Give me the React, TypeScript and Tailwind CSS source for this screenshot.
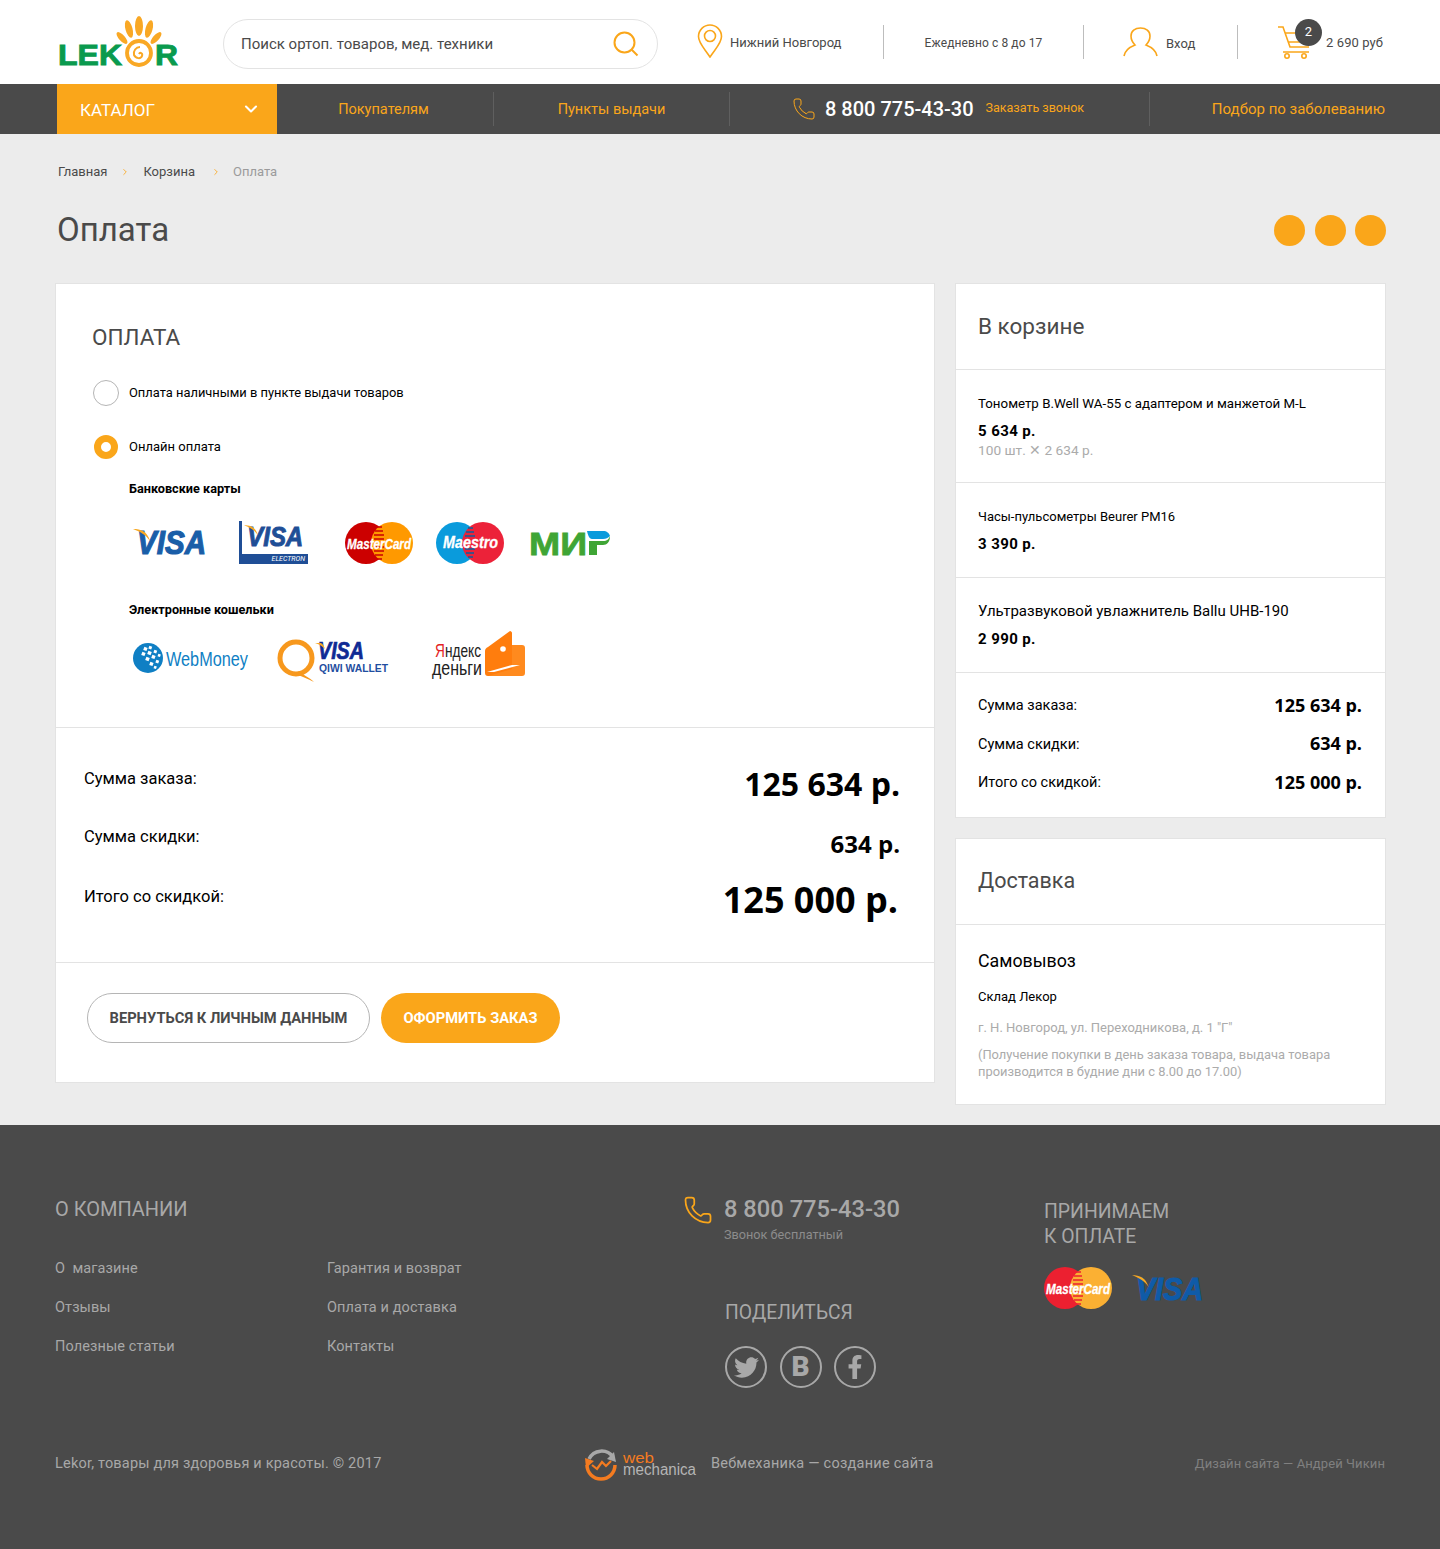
import React from 'react';
import { ChevronDown, ChevronRight, Phone } from 'lucide-react';
import { FaTwitter, FaFacebookF } from 'react-icons/fa';

const VisaLogo = ({ className = '', color = '#1a5ea8' }: { className?: string; color?: string }) => (
  <svg viewBox="0 0 74 30" className={`overflow-visible ${className}`}>
    <text x="4" y="28" fontFamily="Liberation Sans" fontWeight="700" fontStyle="italic" fontSize="33" fill={color} stroke={color} strokeWidth="1.2" textLength="69" lengthAdjust="spacingAndGlyphs">VISA</text>
    <path d="M0 3 C8 3 14 5 17 15 C13 9 8 6 0 3Z" fill="#f7a823" />
  </svg>
);

const MasterCardLogo = ({ className = '', left = '#cc0000', right = '#ff9900' }: { className?: string; left?: string; right?: string }) => (
  <svg viewBox="0 0 68 42" className={`overflow-visible ${className}`}>
    <circle cx="21" cy="21" r="21" fill={left} />
    <circle cx="47" cy="21" r="21" fill={right} />
    <path d="M32 5h5M30 9h8M29 13h10M29 17h10M29 25h10M29 29h10M30 33h8M32 37h5" stroke={left} strokeWidth="1.6" />
    <text x="2" y="26.500" fontFamily="Liberation Sans" fontWeight="700" fontStyle="italic" fontSize="15" fill="#fff" stroke="#fff" strokeWidth="0.3" textLength="64" lengthAdjust="spacingAndGlyphs">MasterCard</text>
  </svg>
);

const MaestroLogo = ({ className = '' }: { className?: string }) => (
  <svg viewBox="0 0 68 42" className={`overflow-visible ${className}`}>
    <circle cx="21" cy="21" r="21" fill="#0a9bdc" />
    <circle cx="47" cy="21" r="21" fill="#ec2239" />
    <path d="M32 6h5M30 10h8M29 14h10M29 27h10M30 31h8M32 35h5" stroke="#0a5f9e" strokeWidth="1.6" />
    <text x="7" y="26" fontFamily="Liberation Sans" fontWeight="700" fontStyle="italic" fontSize="16" fill="#fff" stroke="#fff" strokeWidth="0.3" textLength="55" lengthAdjust="spacingAndGlyphs">Maestro</text>
  </svg>
);

const MirLogo = ({ className = '' }: { className?: string }) => (
  <svg viewBox="0 0 81 24" className={`overflow-visible ${className}`}>
    <text x="0" y="23.500" fontFamily="Liberation Sans" fontWeight="700" fontSize="32" fill="#3fa535" stroke="#3fa535" strokeWidth="0.8" textLength="58" lengthAdjust="spacingAndGlyphs">МИ</text>
    <rect x="60" y="10" width="8" height="14" fill="#3fa535" />
    <path d="M60 10h14c4 0 6-2 7-5 0 6-3 9-7 9h-14z" fill="#3fa535" />
    <path d="M58 0h16c4 0 6 2 7 5-2 2-4 3-7 3h-11c-3 0-4-4-5-8z" fill="#0a9bdc" />
  </svg>
);

const WebMoneyLogo = ({ className = '' }: { className?: string }) => (
  <svg viewBox="0 0 115 32" className={`overflow-visible ${className}`}>
    <circle cx="15" cy="16" r="15" fill="#0f7fc4" />
    <g fill="#fff">
      <rect x="11" y="5" width="3.400" height="3.400" transform="rotate(20 12 6)" />
      <rect x="16" y="4" width="3" height="3" transform="rotate(20 17 5)" />
      <rect x="9" y="10" width="3.400" height="3.400" transform="rotate(20 10 11)" />
      <rect x="15" y="9" width="3.600" height="3.600" transform="rotate(20 16 10)" />
      <rect x="21" y="8" width="3" height="3" transform="rotate(20 22 9)" />
      <rect x="13" y="15" width="3.600" height="3.600" transform="rotate(20 14 16)" />
      <rect x="19" y="13" width="3.400" height="3.400" transform="rotate(20 20 14)" />
      <rect x="25" y="12" width="2.600" height="2.600" transform="rotate(20 26 13)" />
      <rect x="17" y="20" width="3.400" height="3.400" transform="rotate(20 18 21)" />
      <rect x="23" y="18" width="3" height="3" transform="rotate(20 24 19)" />
      <rect x="21" y="24" width="2.600" height="2.600" transform="rotate(20 22 25)" />
    </g>
    <text x="33" y="24" fontFamily="Liberation Sans" fontSize="20" fill="#0f7fc4" textLength="82" lengthAdjust="spacingAndGlyphs">WebMoney</text>
  </svg>
);

const QiwiLogo = ({ className = '' }: { className?: string }) => (
  <svg viewBox="0 0 111 44" className={`overflow-visible ${className}`}>
    <circle cx="19" cy="19" r="16" fill="none" stroke="#f7981d" strokeWidth="5" />
    <path d="M22 32c4 4 10 6 15 11-5-3-12-5-18-8z" fill="#f7981d" />
    <text x="41" y="20" fontFamily="Liberation Sans" fontWeight="700" fontStyle="italic" fontSize="23" fill="#0f2a94" stroke="#0f2a94" strokeWidth="0.7" textLength="46" lengthAdjust="spacingAndGlyphs">VISA</text>
    <path d="M38 4h6c2 1 3 3 4 6-3-3-6-5-10-6z" fill="#f7a823" />
    <text x="42" y="33" fontFamily="Liberation Sans" fontWeight="700" fontSize="10" fill="#1f4ea0" textLength="69" lengthAdjust="spacingAndGlyphs">QIWI WALLET</text>
  </svg>
);

const YandexLogo = ({ className = '' }: { className?: string }) => (
  <svg viewBox="0 0 93 46" className={`overflow-visible ${className}`}>
    <text x="3" y="27" fontFamily="Liberation Sans" fontSize="18" fill="#222" textLength="46" lengthAdjust="spacingAndGlyphs">
      <tspan fill="#e31e24">Я</tspan>ндекс
    </text>
    <text x="0" y="45" fontFamily="Liberation Sans" fontSize="20" fill="#222" textLength="50" lengthAdjust="spacingAndGlyphs">деньги</text>
    <path d="M53 21c0-2 1-3 3-4l22-16c1 0 2 1 2 2v43H56c-2 0-3-1-3-3z" fill="#ff7d0d" />
    <path d="M80 15h10c2 0 3 1 3 3v25c0 2-1 3-3 3H56l24-7z" fill="#ff8a1e" />
    <path d="M55 42l25-7 8 0-26 7z" fill="#fff" />
    <circle cx="71" cy="19" r="2.800" fill="#fff" />
  </svg>
);

const LekorLogo = () => (
  <svg viewBox="0 0 120 52" className="w-[120px] h-[52px] shrink-0 overflow-visible">
    <text x="0" y="49" fontFamily="Liberation Sans" fontWeight="700" fontSize="29" fill="#0a9a4e" stroke="#0a9a4e" strokeWidth="0.9" textLength="64" lengthAdjust="spacingAndGlyphs">LEK</text>
    <text x="97" y="49" fontFamily="Liberation Sans" fontWeight="700" fontSize="29" fill="#0a9a4e" stroke="#0a9a4e" strokeWidth="0.9" textLength="23" lengthAdjust="spacingAndGlyphs">R</text>
    <g fill="#f9a825">
      <ellipse cx="81" cy="10" rx="4" ry="10" />
      <ellipse cx="71" cy="13" rx="3.500" ry="9" transform="rotate(-15 71 13)" />
      <ellipse cx="91" cy="13" rx="3.500" ry="9" transform="rotate(15 91 13)" />
      <ellipse cx="64" cy="22" rx="3" ry="7.500" transform="rotate(-42 64 22)" />
      <ellipse cx="98" cy="22" rx="3" ry="7.500" transform="rotate(42 98 22)" />
    </g>
    <circle cx="81" cy="37" r="12" fill="none" stroke="#f9a825" strokeWidth="3.800" />
    <path d="M81 38c1-2 4-1 3 2-1 3-6 3-8-1-1-4 2-8 6-8" fill="none" stroke="#f9a825" strokeWidth="2" />
  </svg>
);

const SearchIcon = () => (
  <svg viewBox="0 0 26 26" className="w-[26px] h-[26px]" fill="none" stroke="#faa61a" strokeWidth="2">
    <circle cx="11.500" cy="11.500" r="10" />
    <path d="M18.500 18.500l6 6" />
  </svg>
);

const PinIcon = () => (
  <svg viewBox="0 0 26 34" className="w-[26px] h-[34px] shrink-0" fill="none" stroke="#faa61a" strokeWidth="1.600">
    <path d="M13 33C7 24 1.500 19 1.500 12.500a11.500 11.500 0 0 1 23 0C24.500 19 19 24 13 33z" />
    <circle cx="13" cy="12" r="5.500" />
  </svg>
);

const UserIcon = () => (
  <svg viewBox="0 0 35 30" className="w-[35px] h-[30px] shrink-0" fill="none" stroke="#faa61a" strokeWidth="1.600">
    <path d="M1 29c1-6 6-9 11-11-3-3-4-6-4-9 0-5 4-8 9.500-8S27 4 27 9c0 3-1 6-4 9 5 2 10 5 11 11" />
  </svg>
);

const CartIcon = () => (
  <svg viewBox="0 0 32 33" className="w-[32px] h-[33px]" fill="none" stroke="#faa61a" strokeWidth="1.600">
    <path d="M0 1h5l7 20h19M7 7h24l-3 9H10M5 26h26" />
    <circle cx="9" cy="30" r="2.200" />
    <circle cx="26" cy="30" r="2.200" />
  </svg>
);

const MechanicaLogo = () => (
  <svg viewBox="0 0 111 32" className="w-[111px] h-[32px] shrink-0 overflow-visible">
    <path d="M4 11A14 14 0 0 1 28 9" fill="none" stroke="#a8a8a8" strokeWidth="3.500" />
    <path d="M29 4l2 10-9-3z" fill="#a8a8a8" />
    <path d="M30 17A14 14 0 0 1 2 17" fill="none" stroke="#f47b20" strokeWidth="3.500" />
    <path d="M1 20l-1-10 9 3z" fill="#f47b20" />
    <path d="M7 17l5 4 5-7 4 4 5-5" fill="none" stroke="#f47b20" strokeWidth="2.200" />
    <text x="38" y="15" fontFamily="Liberation Sans" fontSize="15" fill="#f47b20" textLength="31" lengthAdjust="spacingAndGlyphs">web</text>
    <text x="38" y="27" fontFamily="Liberation Sans" fontSize="16" fill="#b5b5b5" textLength="73" lengthAdjust="spacingAndGlyphs">mechanica</text>
  </svg>
);

const NavDivider = () => <div className="w-px h-[34px] bg-[#5f5f5f] shrink-0" />;
const HeadDivider = () => <div className="w-px h-[34px] bg-[#bdbdbd] shrink-0" />;

const CartRow = ({ name, price, note, nameSize }: { name: string; price: string; note?: string; nameSize: string }) => (
  <div className={`px-[22px] border-b border-[#e3e3e3] pt-[25px] ${note ? 'h-[113px]' : 'h-[95px]'}`}>
    <div className={`text-black leading-[17px] ${nameSize}`}>{name}</div>
    <div className="text-[15px] font-bold text-black leading-[18px] mt-[10px] tracking-[0.4px]">{price}</div>
    {note && <div className="text-[13.700px] text-[#ababab] leading-[18px] mt-[1px]">{note}</div>}
  </div>
);

const CartSum = ({ label, value }: { label: string; value: string }) => (
  <div className="flex justify-between items-center h-[38.500px]">
    <span className="text-[14.500px] text-black mt-[2px]">{label}</span>
    <span className="font-['Open_Sans',sans-serif] font-bold text-[18px] text-black">{value}</span>
  </div>
);

export default function App() {
  return (
    <div className="w-[1440px] bg-[#ececec] font-['Roboto',sans-serif] text-[#4a4a4a]">
      {/* шапка */}
      <header className="h-[84px] bg-white flex items-center pl-[58px]">
        <div className="mt-[-1px]"><LekorLogo /></div>
        <div className="ml-[45px] mt-[4px] w-[435px] h-[50px] rounded-full border border-[#e3e3e3] flex items-center justify-between pl-[17px] pr-[18px]">
          <span className="text-[15px] text-[#4a4a4a]">Поиск ортоп. товаров, мед. техники</span>
          <SearchIcon />
        </div>
        <div className="ml-[39px] mb-[2px]"><PinIcon /></div>
        <span className="ml-[7px] w-[153px] text-[13px] mb-[-1px]">Нижний Новгород</span>
        <HeadDivider />
        <span className="w-[199px] text-center text-[12px] tracking-[0.1px] mt-[2px]">Ежедневно с 8 до 17</span>
        <HeadDivider />
        <div className="ml-[39px]"><UserIcon /></div>
        <span className="ml-[8px] w-[71px] text-[13px] mt-[4px]">Вход</span>
        <HeadDivider />
        <div className="relative ml-[40px] w-[48px] h-[33px]">
          <CartIcon />
          <div className="absolute left-[17px] top-[-7px] w-[27px] h-[27px] rounded-full bg-[#4a4a4a] text-white text-[13px] flex items-center justify-center">2</div>
        </div>
        <span className="text-[13px] mb-[-1px] tracking-[0.1px]">2 690 руб</span>
      </header>

      {/* навигация */}
      <nav className="h-[50px] bg-[#4a4a4a] flex items-center pl-[57px] text-[#faa61a]">
        <div className="w-[220px] h-[50px] bg-[#faa61a] flex items-center justify-between pl-[23px] pr-[16px] text-white text-[17px]">
          <span className="mt-[4px]">КАТАЛОГ</span>
          <ChevronDown size={20} strokeWidth={2.5} />
        </div>
        <div className="w-[216px] text-center text-[14.500px] pr-[3px] mt-[1px]">Покупателям</div>
        <NavDivider />
        <div className="w-[235px] text-center text-[14.500px] mt-[1px]">Пункты выдачи</div>
        <NavDivider />
        <div className="w-[419px] flex items-center pl-[62px]">
          <Phone size={24} strokeWidth={1} className="text-[#faa61a]" />
          <span className="ml-[9px] text-[20px] font-medium text-white">8 800 775-43-30</span>
          <span className="ml-[12px] text-[12.500px] mb-[2px]">Заказать звонок</span>
        </div>
        <NavDivider />
        <div className="w-[235px] text-right text-[15px]">Подбор по заболеванию</div>
      </nav>

      {/* контент */}
      <main className="pl-[55px] pr-[54px] pb-[20px]">
        <div className="flex items-center pt-[29px] pl-[3px] text-[13px] leading-[17px]">
          <span>Главная</span>
          <ChevronRight size={10} strokeWidth={2} className="ml-[13px] text-[#faa61a]" />
          <span className="ml-[13px]">Корзина</span>
          <ChevronRight size={10} strokeWidth={2} className="ml-[16px] text-[#faa61a]" />
          <span className="ml-[12px] text-[#9b9b9b]">Оплата</span>
        </div>
        <div className="flex items-center justify-between mt-[25px] h-[50px] pl-[2px]">
          <h1 className="text-[33px] leading-[50px] font-normal">Оплата</h1>
          <div className="flex gap-[9.500px] mt-[1px]">
            <div className="w-[31px] h-[31px] rounded-full bg-[#faa61a]" />
            <div className="w-[31px] h-[31px] rounded-full bg-[#faa61a]" />
            <div className="w-[31px] h-[31px] rounded-full bg-[#faa61a]" />
          </div>
        </div>

        <div className="flex items-start gap-[20px] mt-[28px]">
          {/* левая карточка */}
          <section className="w-[880px] h-[800px] bg-white border border-[#e3e3e3] shrink-0">
            <div className="h-[444px] border-b border-[#e3e3e3] pl-[36px] pt-[38px]">
              <h2 className="text-[22.500px] leading-[30px] font-normal">ОПЛАТА</h2>
              <div className="flex items-center h-[26px] mt-[28px] ml-[1px]">
                <div className="w-[26px] h-[26px] rounded-full border border-[#b5b5b5]" />
                <span className="ml-[10px] text-[12.900px] text-black">Оплата наличными в пункте выдачи товаров</span>
              </div>
              <div className="flex items-center h-[26px] mt-[28px] ml-[1px]">
                <div className="w-[24px] h-[24px] ml-[1px] rounded-full border-[7px] border-[#faa61a]" />
                <span className="ml-[11px] text-[13px] text-black">Онлайн оплата</span>
              </div>
              <div className="pl-[37px]">
                <h3 className="mt-[20px] text-[12.700px] leading-[17px] font-bold text-black">Банковские карты</h3>
                <div className="flex items-center h-[45px] mt-[23px]">
                  <VisaLogo className="ml-[4px] w-[74px] h-[30px] mb-[3px]" />
                  <div className="ml-[32px] w-[69px] h-[43px] shrink-0 border-l-[3px] border-[#1f4e96] flex flex-col justify-between">
                    <VisaLogo className="ml-[2px] w-[60px] h-[28px]" color="#1f4e96" />
                    <div className="h-[10px] bg-[#1f4e96] ml-[-3px] text-right pr-[3px] text-[7px] leading-[10px] italic text-white">ELECTRON</div>
                  </div>
                  <MasterCardLogo className="ml-[37px] w-[68px] h-[42px]" />
                  <MaestroLogo className="ml-[23px] w-[68px] h-[42px]" />
                  <MirLogo className="ml-[25px] w-[81px] h-[24px]" />
                </div>
                <h3 className="mt-[36px] text-[12.700px] leading-[17px] font-bold text-black">Электронные кошельки</h3>
                <div className="flex items-center h-[54px] mt-[13px]">
                  <WebMoneyLogo className="ml-[4px] w-[115px] h-[32px]" />
                  <QiwiLogo className="ml-[29px] w-[111px] h-[44px] mt-[6px]" />
                  <YandexLogo className="ml-[44px] w-[93px] h-[46px] mb-[10px]" />
                </div>
              </div>
            </div>

            <div className="h-[235px] border-b border-[#e3e3e3] pl-[28px] pr-[34px] pt-[36px] text-[16.500px] text-black">
              <div className="flex justify-between items-start h-[59px]">
                <span className="leading-[28px] mt-[1px]">Сумма заказа:</span>
                <span className="font-['Open_Sans',sans-serif] font-bold text-[32px] leading-[42px] mt-[-1px]">125 634 р.</span>
              </div>
              <div className="flex justify-between items-start h-[59px]">
                <span className="leading-[28px]">Сумма скидки:</span>
                <span className="font-['Open_Sans',sans-serif] font-bold text-[24px] leading-[32px] mt-[5px]">634 р.</span>
              </div>
              <div className="flex justify-between items-start">
                <span className="leading-[28px] mt-[1px]">Итого со скидкой:</span>
                <span className="font-['Open_Sans',sans-serif] font-bold text-[36px] leading-[48px] mr-[2px] mt-[-6px]">125 000 р.</span>
              </div>
            </div>

            <div className="flex pl-[31px] pt-[30px] gap-[11px]">
              <button className="w-[283px] h-[50px] rounded-full border border-[#b5b5b5] text-[14.700px] font-bold text-[#4a4a4a]">ВЕРНУТЬСЯ К ЛИЧНЫМ ДАННЫМ</button>
              <button className="w-[179px] h-[50px] rounded-full bg-[#faa61a] text-[14.700px] font-bold text-white">ОФОРМИТЬ ЗАКАЗ</button>
            </div>
          </section>

          {/* правая колонка */}
          <div className="w-[431px] flex flex-col gap-[20px]">
            <section className="bg-white border border-[#e3e3e3] h-[535px]">
              <h2 className="h-[86px] border-b border-[#e3e3e3] px-[22px] pt-[26px] text-[22.500px] leading-[32px] font-normal">В корзине</h2>
              <CartRow name="Тонометр B.Well WA-55 с адаптером и манжетой M-L" price="5 634 р." note="100 шт. ✕ 2 634 р." nameSize="text-[13.300px]" />
              <CartRow name="Часы-пульсометры Beurer PM16" price="3 390 р." nameSize="text-[13px]" />
              <CartRow name="Ультразвуковой увлажнитель Ballu UHB-190" price="2 990 р." nameSize="text-[15px]" />
              <div className="pl-[22px] pr-[23px] pt-[13px]">
                <CartSum label="Сумма заказа:" value="125 634 р." />
                <CartSum label="Сумма скидки:" value="634 р." />
                <CartSum label="Итого со скидкой:" value="125 000 р." />
              </div>
            </section>

            <section className="bg-white border border-[#e3e3e3] h-[267px]">
              <h2 className="h-[86px] border-b border-[#e3e3e3] px-[22px] pt-[26px] text-[21.500px] leading-[32px] font-normal">Доставка</h2>
              <div className="px-[22px] pt-[23px]">
                <div className="text-[17.800px] leading-[26px] text-black">Самовывоз</div>
                <div className="text-[13px] leading-[18px] text-black mt-[14px]">Склад Лекор</div>
                <div className="text-[13px] leading-[18px] text-[#ababab] mt-[13px]">г. Н. Новгород, ул. Переходникова, д. 1 "Г"</div>
                <div className="text-[12.900px] leading-[17px] text-[#ababab] mt-[9px]">(Получение покупки в день заказа товара, выдача товара производится в будние дни с 8.00 до 17.00)</div>
              </div>
            </section>
          </div>
        </div>
      </main>

      {/* подвал */}
      <footer className="h-[424px] bg-[#4a4a4a] px-[55px] pt-[70px] text-[#a8a8a8]">
        <div className="flex h-[233px]">
          <div className="w-[628px] shrink-0">
            <h4 className="text-[20px] leading-[28px] font-normal">О КОМПАНИИ</h4>
            <div className="grid grid-cols-[272px_1fr] mt-[26px] text-[14.500px] leading-[39px] tracking-[0.1px]">
              <span>О&nbsp; магазине</span>
              <span>Гарантия и возврат</span>
              <span>Отзывы</span>
              <span>Оплата и доставка</span>
              <span>Полезные статьи</span>
              <span>Контакты</span>
            </div>
          </div>
          <div className="w-[361px] shrink-0">
            <div className="flex">
              <Phone size={30} strokeWidth={1.4} className="text-[#faa61a] shrink-0" />
              <div className="ml-[11px]">
                <div className="text-[23.700px] leading-[28px] font-medium">8 800 775-43-30</div>
                <div className="text-[12.700px] leading-[18px] text-[#8c8c8c] mt-[3px]">Звонок бесплатный</div>
              </div>
            </div>
            <h4 className="ml-[42px] mt-[55px] text-[19.300px] leading-[28px] font-normal">ПОДЕЛИТЬСЯ</h4>
            <div className="ml-[42px] mt-[19px] flex gap-[12.500px]">
              <div className="w-[42px] h-[42px] rounded-full border-2 border-[#a8a8a8] flex items-center justify-center"><FaTwitter size={25} /></div>
              <div className="w-[42px] h-[42px] rounded-full border-2 border-[#a8a8a8] flex items-center justify-center text-[28px] font-black">B</div>
              <div className="w-[42px] h-[42px] rounded-full border-2 border-[#a8a8a8] flex items-center justify-center"><FaFacebookF size={24} /></div>
            </div>
          </div>
          <div>
            <h4 className="text-[19.400px] leading-[25px] font-normal mt-[4px]">ПРИНИМАЕМ<br />К ОПЛАТЕ</h4>
            <div className="flex items-center mt-[18px]">
              <MasterCardLogo className="w-[68px] h-[42px]" left="#ec2030" right="#fbb033" />
              <VisaLogo className="ml-[20px] w-[72px] h-[30px] mb-[3px]" color="#0f5ba8" />
            </div>
          </div>
        </div>
        <div className="flex items-center mt-[18px] h-[36px]">
          <span className="w-[530px] text-[14.500px] tracking-[0.2px]">Lekor, товары для здоровья и красоты. © 2017</span>
          <MechanicaLogo />
          <span className="ml-[15px] text-[14.500px] tracking-[0.25px]">Вебмеханика — создание сайта</span>
          <span className="ml-auto text-[13px] text-[#808080] tracking-[0.1px]">Дизайн сайта — Андрей Чикин</span>
        </div>
      </footer>
    </div>
  );
}
